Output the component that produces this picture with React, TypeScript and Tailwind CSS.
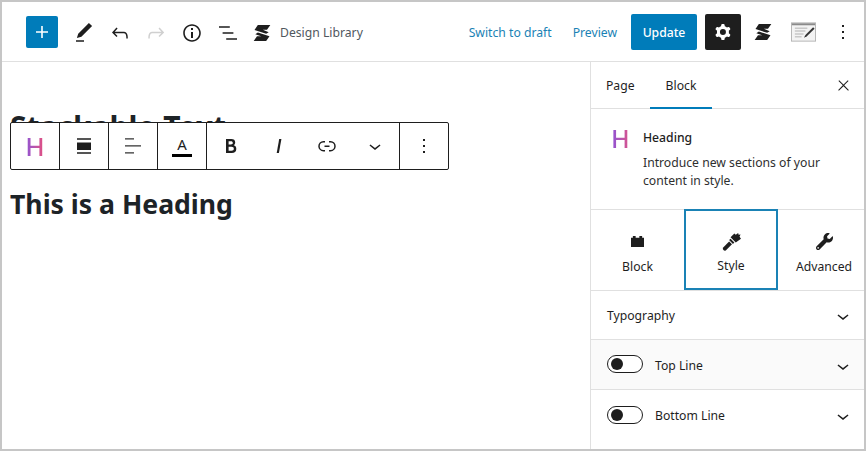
import { FC, ReactNode } from 'react';
import { FaWrench } from 'react-icons/fa';

const Icon: FC<{ d: string; className?: string; size?: number }> = ({ d, className = '', size = 24 }) => (
  <svg viewBox="0 0 24 24" width={size} height={size} fill="currentColor" fillRule="evenodd" className={className}>
    <path d={d} />
  </svg>
);

const icons = {
  plus: 'M18 11.2h-5.2V6h-1.6v5.2H6v1.6h5.2V18h1.6v-5.2H18z',
  pencil: 'M20.1 5.1L16.9 2 6.2 12.7l-1.3 4.4 4.5-1.3L20.1 5.1zM4 20.8h8v-1.5H4v1.5z',
  undo: 'M18.3 11.7c-.6-.6-1.4-.9-2.3-.9H6.7l2.9-3.3-1.1-1-4.5 5L8.5 16l1-1-2.7-2.7H16c.5 0 .9.2 1.3.5 1 1 1 3.4 1 4.5v.3h1.5v-.2c0-1.5 0-4.3-1.5-5.7z',
  redo: 'M15.6 6.5l-1.1 1 2.9 3.3H8c-.9 0-1.7.3-2.3.9-1.4 1.5-1.4 4.2-1.4 5.6v.2h1.5v-.3c0-1.1 0-3.5 1-4.5.3-.3.7-.5 1.3-.5h9.2L14.5 15l1.1 1.1 4.6-4.6-4.6-5z',
  info: 'M12 3.2c-4.8 0-8.8 3.9-8.8 8.8 0 4.8 3.9 8.8 8.8 8.8 4.8 0 8.8-3.9 8.8-8.8 0-4.8-4-8.8-8.8-8.8zm0 16c-4 0-7.2-3.3-7.2-7.2C4.8 8 8 4.8 12 4.8s7.2 3.3 7.2 7.2c0 4-3.2 7.2-7.2 7.2zM11 17h2v-6h-2v6zm0-8h2V7h-2v2z',
  list: 'M13.8 5.2H3v1.5h10.8V5.2zm-3.6 12v1.5H21v-1.5H10.2zm7.2-6H6.6v1.5h10.8v-1.5z',
  gear: 'M10.289 4.836A1 1 0 0111.275 4h1.306a1 1 0 01.987.836l.244 1.466c.787.26 1.503.679 2.108 1.218l1.393-.522a1 1 0 011.216.437l.653 1.13a1 1 0 01-.23 1.273l-1.148.944a6.025 6.025 0 010 2.435l1.149.946a1 1 0 01.23 1.272l-.653 1.13a1 1 0 01-1.216.437l-1.394-.522c-.605.54-1.32.958-2.108 1.218l-.244 1.466a1 1 0 01-.987.836h-1.306a1 1 0 01-.986-.836l-.244-1.466a5.995 5.995 0 01-2.108-1.218l-1.394.522a1 1 0 01-1.217-.436l-.653-1.131a1 1 0 01.23-1.272l1.149-.946a6.026 6.026 0 010-2.435l-1.148-.944a1 1 0 01-.23-1.272l.653-1.131a1 1 0 011.217-.437l1.393.522a5.994 5.994 0 012.108-1.218l.244-1.466zM14.929 12a3 3 0 11-6 0 3 3 0 016 0z',
  close: 'M13 11.8l6.1-6.3-1-1-6.1 6.2-6.1-6.2-1 1 6.1 6.3-6.5 6.7 1 1 6.5-6.6 6.5 6.6 1-1z',
  chevron: 'M17.5 11.6L12 16l-5.5-4.4.9-1.2L12 14l4.6-3.6.9 1.2z',
  dots: 'M13 19h-2v-2h2v2zm0-6h-2v-2h2v2zm0-6h-2V5h2v2z',
  bold: 'M14.7 11.3c1-.6 1.5-1.6 1.5-3 0-2.3-1.3-3.4-4-3.4H7v14h5.8c1.4 0 2.5-.3 3.3-1 .8-.7 1.2-1.7 1.2-2.9.1-1.9-.8-3.1-2.6-3.7zm-5.1-4h2.3c.6 0 1.1.1 1.4.4.3.3.5.7.5 1.2s-.2 1-.5 1.2c-.3.3-.8.4-1.4.4H9.600V7.3zm4.6 9c-.4.3-1 .4-1.7.4H9.6v-3.9h2.9c.7 0 1.3.2 1.7.5.4.3.6.8.6 1.5s-.2 1.2-.6 1.5z',
  italic: 'M12.200 5L9.700 19h2.200l2.500-14z',
  link: 'M10 17.389H8.444A5.194 5.194 0 1 1 8.444 7H10v1.5H8.444a3.694 3.694 0 0 0 0 7.389H10v1.5ZM14 7h1.556a5.194 5.194 0 0 1 0 10.39H14v-1.5h1.556a3.694 3.694 0 0 0 0-7.39H14V7Zm-4.5 6h5v-1.5h-5V13Z',
  alignLeft: 'M13 5.500H4V4.300h9v1.200Zm7 7H4v-1.200h16v1.200Zm-7 7H4v-1.200h9v1.200Z',
  wide: 'M5 4.200h14v1.500H5V4.200Zm0 4.300h14v7.500H5V8.500Zm0 9.800h14v1.500H5v-1.500Z',
};

// Stackable logo, two slanted bands
const StackableLogo = () => (
  <svg viewBox="0 0 24 24" width={20} height={20} fill="#1e1e1e">
    <path d="M7 2.500H22L18 8H13L20 11L17 13L3 8.500Z" />
    <path d="M4 13.500L7 11.500L21 16L17 21.500H2L6 16H11Z" />
  </svg>
);

const ScreenIcon = () => (
  <svg viewBox="0 0 26 20" width={25} height={20}>
    <rect x="0.5" y="0.5" width="25" height="19" fill="#f3f3f3" stroke="#b5b5b5" />
    <rect x="1" y="1" width="24" height="2" fill="#8a8a8a" />
    <path d="M4 6h13M4 9h11M4 12h9M4 15h7" stroke="#c8c8c8" strokeWidth="1.500" />
    <path d="M23 5l1.500 1.500-8 8-3 1.500 1.500-3z" fill="#333" />
  </svg>
);

const ToolbarCell: FC<{ children: ReactNode; className?: string }> = ({ children, className = '' }) => (
  <div className={`flex items-center justify-center h-full ${className}`}>{children}</div>
);

const PanelRow: FC<{ children: ReactNode; className?: string }> = ({ children, className = '' }) => (
  <div className={`flex items-center justify-between border-b border-[#e0e0e0] pl-4 pr-[9px] ${className}`}>
    {children}
    <Icon d={icons.chevron} className="text-[#1e1e1e] mt-[2px]" />
  </div>
);

const Toggle = () => (
  <span className="flex items-center w-9 h-[18px] rounded-full border border-[#1e1e1e] bg-white pl-[3px] shrink-0">
    <span className="w-3 h-3 rounded-full bg-[#1e1e1e]" />
  </span>
);

export default function App() {
  return (
    <div className="w-[866px] h-[451px] border-2 border-[#c6c6c6] bg-white flex flex-col overflow-hidden text-[#1e1e1e] font-['Noto_Sans',sans-serif] text-[12.200px]">
      {/* Top bar */}
      <header className="h-[60px] shrink-0 border-b border-[#e0e0e0] flex items-center pl-6 pr-[9px]">
        <button className="w-8 h-8 rounded-[2px] bg-[#007cba] text-white flex items-center justify-center">
          <Icon d={icons.plus} />
        </button>
        <div className="flex items-center ml-[14px] gap-3 mt-[2px]">
          <Icon d={icons.pencil} />
          <Icon d={icons.undo} />
          <Icon d={icons.redo} className="text-[#d0d0d0]" />
          <Icon d={icons.info} />
          <Icon d={icons.list} />
        </div>
        <div className="ml-3 mt-[2px]"><StackableLogo /></div>
        <span className="ml-2 pt-[3px] text-[#50575e]">Design Library</span>
        <span className="ml-auto pt-[3px] text-[#1a82b5]">Switch to draft</span>
        <span className="ml-[21px] pt-[3px] text-[#1a82b5]">Preview</span>
        <button className="ml-[14px] w-[66px] h-9 pt-[3px] rounded-[2px] bg-[#007cba] text-white font-medium">Update</button>
        <button className="ml-2 w-9 h-9 rounded-[2px] bg-[#1e1e1e] text-white flex items-center justify-center">
          <Icon d={icons.gear} />
        </button>
        <div className="ml-3"><StackableLogo /></div>
        <div className="ml-[18px]"><ScreenIcon /></div>
        <Icon d={icons.dots} className="ml-[15px]" />
      </header>

      <div className="flex flex-1 min-h-0">
        {/* Canvas */}
        <main className="relative flex-1 pl-2 pt-[47px]">
          <h2 className="text-[30px] leading-[36px] font-bold text-[#1d2327]">Stackable Text</h2>
          <h2 className="mt-[41px] text-[26.600px] leading-[36px] font-bold text-[#1d2327]">This is a Heading</h2>
          <div className="absolute left-2 top-[60px] w-[439px] h-12 flex items-center bg-white border border-[#1e1e1e] rounded-[2px] divide-x divide-[#1e1e1e]">
            <ToolbarCell className="w-[49px]">
              <span className="text-[26px] leading-none font-medium bg-gradient-to-r from-[#8c4fd8] to-[#ea4a77] bg-clip-text text-transparent">H</span>
            </ToolbarCell>
            <ToolbarCell className="w-[49px]"><Icon d={icons.wide} /></ToolbarCell>
            <ToolbarCell className="w-[49px]"><Icon d={icons.alignLeft} className="text-[#333]" /></ToolbarCell>
            <ToolbarCell className="w-[49px]">
              <div className="flex flex-col items-center">
                <span className="text-[15px] leading-[19px]">A</span>
                <span className="w-5 h-[3px] bg-black" />
              </div>
            </ToolbarCell>
            <ToolbarCell className="w-[193px] justify-start pl-3 gap-6">
              <Icon d={icons.bold} />
              <Icon d={icons.italic} />
              <Icon d={icons.link} />
              <Icon d={icons.chevron} />
            </ToolbarCell>
            <ToolbarCell className="flex-1"><Icon d={icons.dots} /></ToolbarCell>
          </div>
        </main>

        {/* Sidebar */}
        <aside className="w-[274px] shrink-0 border-l border-[#e0e0e0] flex flex-col">
          <div className="h-[47px] shrink-0 border-b border-[#e0e0e0] flex items-center pl-[15px] pr-[12px]">
            <span className="pt-[3px]">Page</span>
            <span className="relative ml-[31px] h-full flex items-center pt-[3px]">
              Block
              <span className="absolute -left-4 -right-4 -bottom-px h-[2px] bg-[#007cba]" />
            </span>
            <Icon d={icons.close} className="ml-auto" size={17} />
          </div>

          <div className="h-[101px] shrink-0 border-b border-[#e0e0e0] flex pl-5 pt-4">
            <span className="w-[22px] text-[25px] leading-[26px] font-medium bg-gradient-to-r from-[#8c4fd8] to-[#ea4a77] bg-clip-text text-transparent">H</span>
            <div className="ml-[10px]">
              <p className="font-medium leading-[26px]">Heading</p>
              <p className="mt-[3px] leading-[18px] text-[#2f2f2f]">Introduce new sections of your<br />content in style.</p>
            </div>
          </div>

          <div className="h-[81px] shrink-0 border-b border-[#e0e0e0] flex">
            <div className="w-[93px] flex flex-col items-center pt-[25px] gap-[10px]">
              <svg viewBox="0 0 16 14" width={15} height={13} fill="#1e1e1e">
                <path d="M1 3h2V1h3v2h4V1h3v2h2v10H1V3Z" />
              </svg>
              <span>Block</span>
            </div>
            <div className="w-[94px] -mt-px h-[81px] border-2 border-[#1a82b5] flex flex-col items-center pt-[21px] gap-[6px]">
              <svg viewBox="0 0 20 20" width={19} height={19} fill="#1e1e1e">
                <path d="M1 16.500L7.500 10L10.500 13L4 19.500Q2.500 20 1.500 19Q.5 18 1 16.500Z" />
                <path d="M7.500 8.500L11.500 12.500L13 11L9 7Z" />
                <path d="M9 5.500L13 1.500L14.500 3L17 1L17.500 3L19.500 2.500L18.500 5L20 7L14.500 11Z" />
              </svg>
              <span>Style</span>
            </div>
            <div className="flex-1 flex flex-col items-center pl-[6px] pt-[22px] gap-[7px]">
              <FaWrench size={17} className="text-[#1e1e1e] mt-px mb-px" />
              <span>Advanced</span>
            </div>
          </div>

          <PanelRow className="h-[49px] shrink-0">
            <span className="pt-[3px]">Typography</span>
          </PanelRow>
          <PanelRow className="h-[50px] shrink-0 bg-[#fafafa]">
            <span className="flex items-center gap-3">
              <Toggle />
              <span className="pt-[3px]">Top Line</span>
            </span>
          </PanelRow>
          <div className="flex items-center justify-between pl-4 pr-[9px] h-[50px]">
            <span className="flex items-center gap-3">
              <Toggle />
              <span className="pt-[3px]">Bottom Line</span>
            </span>
            <Icon d={icons.chevron} className="mt-[2px]" />
          </div>
        </aside>
      </div>
    </div>
  );
}
